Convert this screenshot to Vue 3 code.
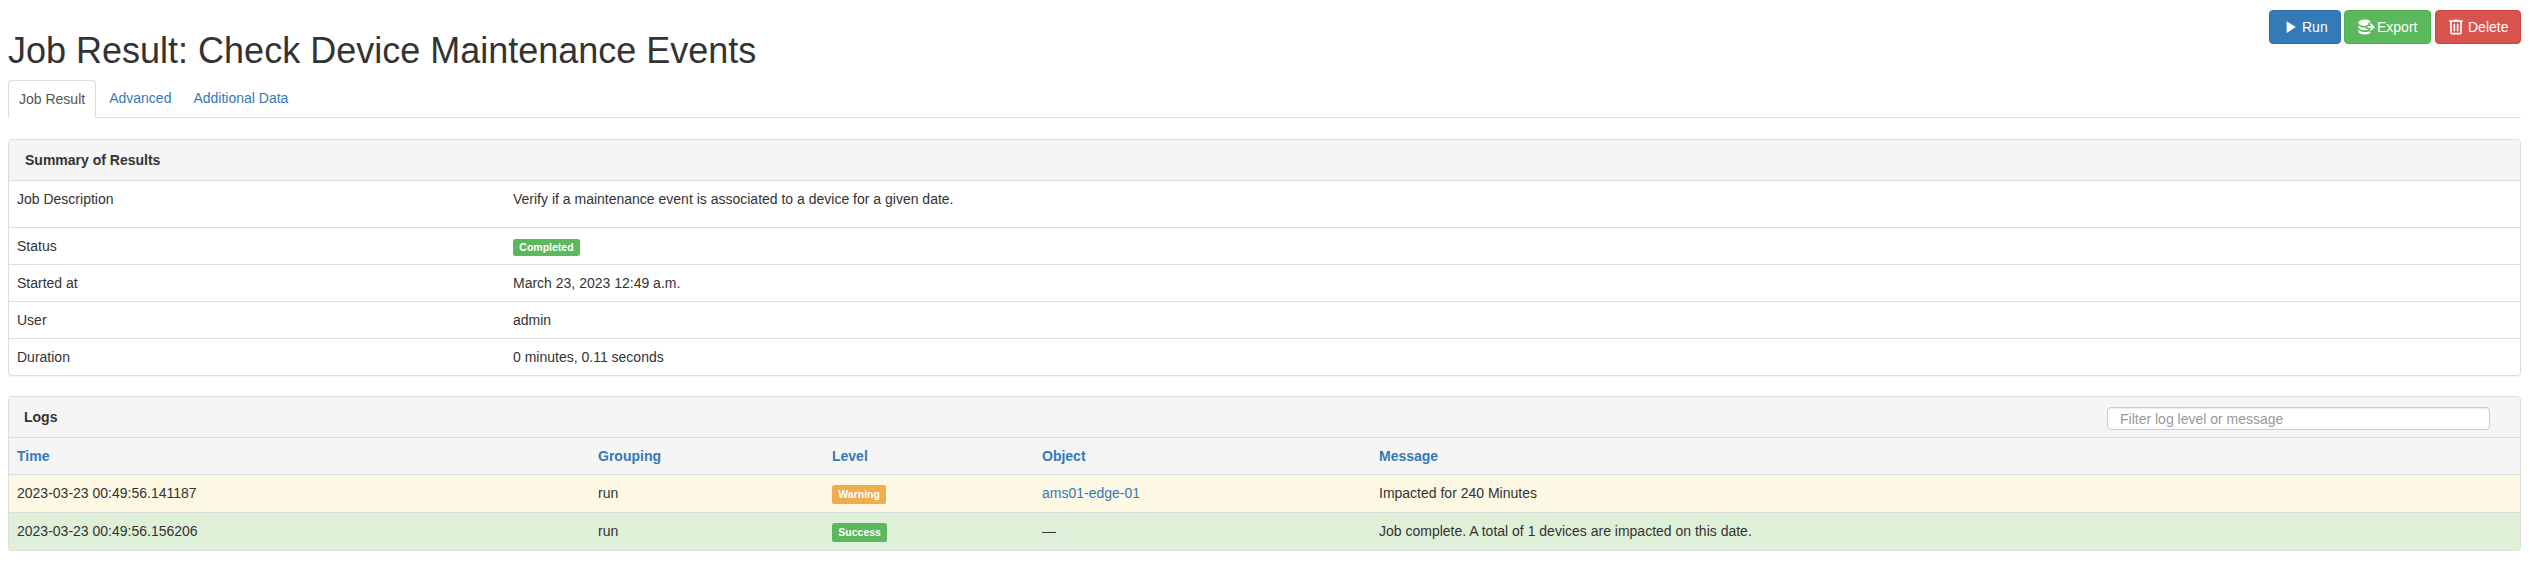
<script setup>
const summary = [
  { k: 'Job Description', v: 'Verify if a maintenance event is associated to a device for a given date.', cls: 'tall' },
  { k: 'Status', badge: 'Completed' },
  { k: 'Started at', v: 'March 23, 2023 12:49 a.m.' },
  { k: 'User', v: 'admin' },
  { k: 'Duration', v: '0 minutes, 0.11 seconds' },
]
const logs = [
  { time: '2023-03-23 00:49:56.141187', group: 'run', level: 'Warning', obj: 'ams01-edge-01', msg: 'Impacted for 240 Minutes', cls: 'warn' },
  { time: '2023-03-23 00:49:56.156206', group: 'run', level: 'Success', obj: '—', msg: 'Job complete. A total of 1 devices are impacted on this date.', cls: 'ok' },
]
</script>

<template>
  <div class="page">
    <div class="actions">
      <a class="btn run">
        <svg class="ic" viewBox="0 0 24 24"><path d="M8 5.14v14l11-7-11-7z" /></svg>
        <span>Run</span>
      </a>
      <a class="btn export">
        <svg class="ic" viewBox="0 0 24 24"><path d="M12 3C7.58 3 4 4.79 4 7s3.58 4 8 4c.5 0 1-.03 1.5-.08V9.5h2.89l-1-1L18.9 5C17.5 3.8 14.94 3 12 3zM18.92 7.08L17.5 8.5 20 11h-5v2h5l-2.5 2.5 1.42 1.42L23.84 12zM4 9v3c0 2.21 3.58 4 8 4 1.17 0 2.26-.14 3.25-.37l1.13-1.13H13.5v-1.58c-.5.05-1 .08-1.5.08-4.42 0-8-1.79-8-4zM4 14v3c0 2.21 3.58 4 8 4 2.94 0 5.5-.8 6.9-2l-2-2c-1.4.7-3.1 1-4.9 1-4.42 0-8-1.79-8-4z" /></svg>
        <span>Export</span>
      </a>
      <a class="btn del">
        <svg class="ic" viewBox="0 0 24 24"><path d="M9 3v1H4v2h1v13a2 2 0 0 0 2 2h10a2 2 0 0 0 2-2V6h1V4h-5V3H9M7 6h10v13H7V6m2 2v9h2V8H9m4 0v9h2V8h-2z" /></svg>
        <span>Delete</span>
      </a>
    </div>

    <h1 class="title">Job Result: Check Device Maintenance Events</h1>

    <ul class="tabs">
      <li class="tab active">Job Result</li>
      <li class="tab">Advanced</li>
      <li class="tab">Additional Data</li>
    </ul>

    <section class="panel summary">
      <div class="heading">Summary of Results</div>
      <div v-for="r in summary" :key="r.k" class="row" :class="r.cls">
        <div class="key">{{ r.k }}</div>
        <div class="val">
          <span v-if="r.badge" class="label green small">{{ r.badge }}</span>
          <template v-else>{{ r.v }}</template>
        </div>
      </div>
    </section>

    <section class="panel logs">
      <div class="heading logs-heading">
        <span>Logs</span>
        <input class="filter" type="text" placeholder="Filter log level or message" />
      </div>
      <div class="lrow head">
        <a>Time</a><a>Grouping</a><a>Level</a><a>Object</a><a>Message</a>
      </div>
      <div v-for="l in logs" :key="l.time" class="lrow" :class="l.cls">
        <div>{{ l.time }}</div>
        <div>{{ l.group }}</div>
        <div><span class="label" :class="l.cls === 'warn' ? 'orange' : 'green'">{{ l.level }}</span></div>
        <div><a v-if="l.cls === 'warn'">{{ l.obj }}</a><template v-else>{{ l.obj }}</template></div>
        <div>{{ l.msg }}</div>
      </div>
    </section>
  </div>
</template>

<style>
html, body { margin: 0; background: #fff; }
</style>

<style scoped>
.page {
  box-sizing: border-box;
  width: 2535px;
  padding: 10px 14px 0 8px;
  font-family: "Liberation Sans", Arial, sans-serif;
  font-size: 14px;
  line-height: 20px;
  color: #333;
}
.actions {
  display: flex;
  justify-content: flex-end;
  gap: 3px;
  height: 34px;
}
.btn {
  box-sizing: border-box;
  display: flex;
  align-items: center;
  height: 34px;
  padding-left: 10px;
  border-radius: 4px;
  color: #fff;
  border: 1px solid transparent;
}
.run { width: 72px; background: #337ab7; border-color: #2e6da4; }
.export { width: 87px; margin-right: 1px; background: #5cb85c; border-color: #4cae4c; }
.del { width: 86px; background: #d9534f; border-color: #d43f3a; }
.ic { width: 20px; height: 20px; fill: #fff; margin-right: 2px; flex: none; }
.title {
  margin: -13px 0 0;
  font-size: 36px;
  font-weight: 400;
  line-height: 39.6px;
  height: 40px;
}
.tabs {
  display: flex;
  gap: 2px;
  list-style: none;
  margin: 9px 0 0;
  padding: 0;
  height: 37px;
  border-bottom: 1px solid #ddd;
}
.tab {
  box-sizing: border-box;
  height: 38px;
  padding: 8px 10px 0;
  color: #337ab7;
}
.tab.active {
  color: #555;
  background: #fff;
  border: 1px solid #ddd;
  border-bottom-color: #fff;
  border-radius: 4px 4px 0 0;
  padding-top: 8px;
  margin-right: 1px;
}
.panel {
  box-sizing: border-box;
  border: 1px solid #ddd;
  border-radius: 4px;
  background: #fff;
  box-shadow: 0 1px 1px rgba(0, 0, 0, .05);
  overflow: hidden;
}
.summary { margin-top: 21px; }
.logs { margin-top: 20px; }
.heading {
  box-sizing: border-box;
  height: 41px;
  padding: 10px 16px;
  background: #f5f5f5;
  border-bottom: 1px solid #ddd;
  font-weight: 700;
  color: #333;
}
.logs-heading {
  display: flex;
  justify-content: space-between;
  align-items: flex-start;
  padding: 10px 30px 0 15px;
}
.filter {
  box-sizing: border-box;
  width: 383px;
  height: 23px;
  padding: 0 12px;
  border: 1px solid #ccc;
  border-radius: 4px;
  font: 14px "Liberation Sans", Arial, sans-serif;
  color: #555;
  background: #fff;
  box-shadow: inset 0 1px 1px rgba(0, 0, 0, .075);
  outline: none;
}
.filter::placeholder { color: #999; opacity: 1; }
.row {
  display: grid;
  grid-template-columns: 496px 1fr;
  height: 37px;
  box-sizing: border-box;
  border-bottom: 1px solid #ddd;
}
.row:last-child { height: 36px; border-bottom: 0; }
.row.tall { height: 47px; }
.key, .val { padding: 8px; }
.lrow {
  display: grid;
  grid-template-columns: 581px 234px 210px 337px 1fr;
  box-sizing: border-box;
  height: 38px;
  border-bottom: 1px solid #ddd;
}
.lrow > * { padding: 8px; }
.lrow:last-child { border-bottom: 0; height: 37px; }
.head { height: 37px; background: #f5f5f5; font-weight: 700; }
.lrow a { color: #337ab7; }
.warn { background: #fcf8e3; }
.ok { background: #dff0d8; }
.label {
  display: inline-block;
  box-sizing: border-box;
  height: 19px;
  padding: 0 6.3px;
  margin-top: 2px;
  font-size: 10.5px;
  font-weight: 700;
  line-height: 19px;
  color: #fff;
  border-radius: 2.6px;
  vertical-align: top;
}
.label.small { height: 17px; line-height: 16px; margin-top: 3px; }
.green { background: #5cb85c; }
.orange { background: #f0ad4e; }
</style>
